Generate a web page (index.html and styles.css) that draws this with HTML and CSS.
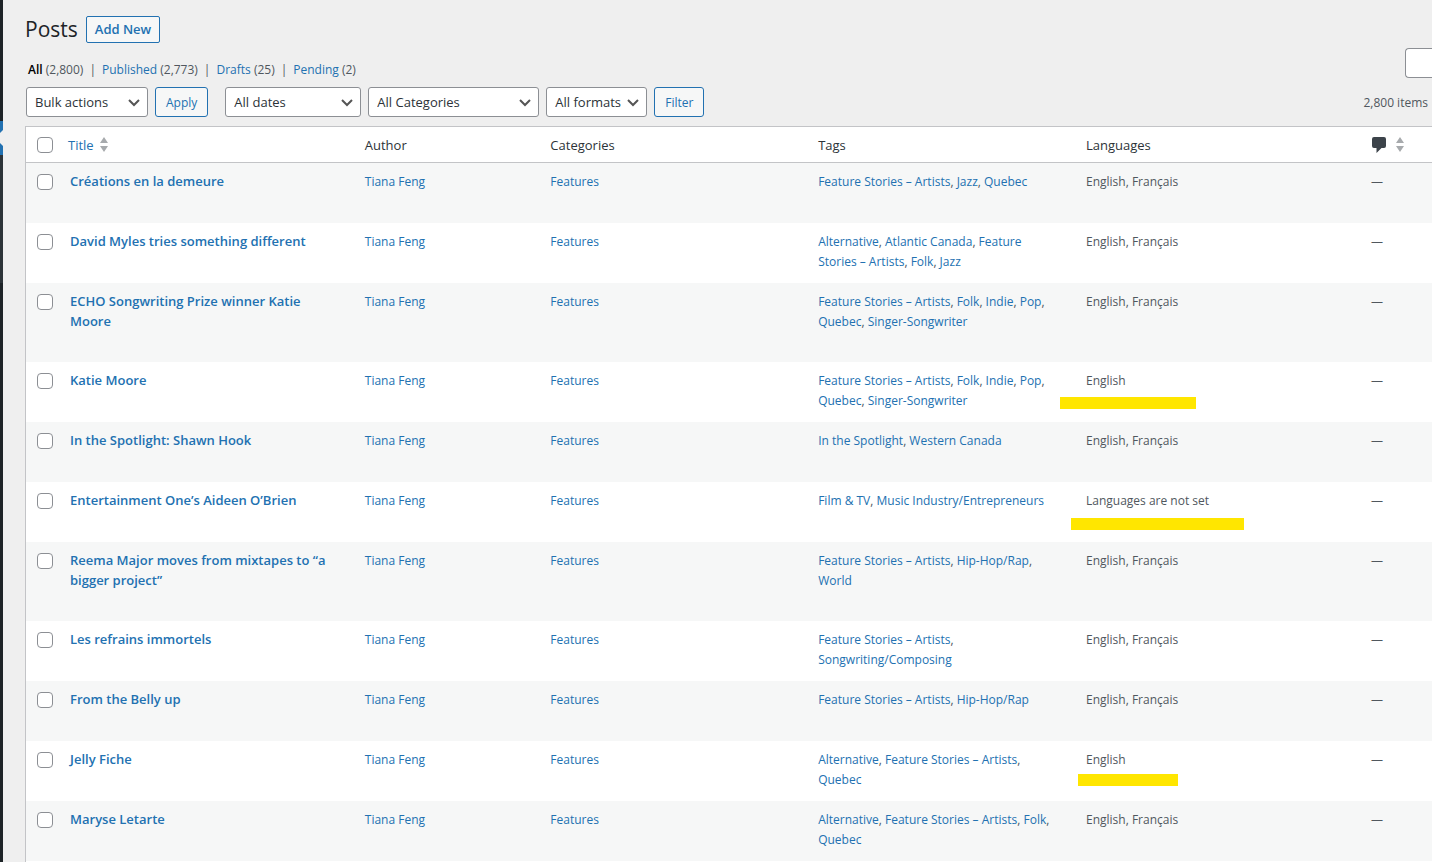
FILE: index.html
```html
<!DOCTYPE html>
<html lang="en">
<head>
    <meta charset="UTF-8">
    <meta name="viewport" content="width=device-width, initial-scale=1.0">
    <title>Posts</title>
    <link rel="stylesheet" href="styles.css">
</head>
<body>
    <aside class="admin-menu">
        <div class="menu-top"></div>
        <div class="menu-current">
            <div class="menu-arrow"></div>
        </div>
        <div class="menu-sub"></div>
    </aside>

    <main class="wrap">
        <header class="page-title">
            <h1>Posts</h1>
            <a href="#" class="add-new">Add New</a>
        </header>

        <div class="views">
            <ul class="status-links">
                <li><a href="#" class="current">All</a> (2,800)</li>
                <li><a href="#">Published</a> (2,773)</li>
                <li><a href="#">Drafts</a> (25)</li>
                <li><a href="#">Pending</a> (2)</li>
            </ul>
            <input type="search" class="search-box" aria-label="Search Posts">
        </div>

        <form class="tablenav">
            <select class="bulk" aria-label="Bulk actions"><option>Bulk actions</option></select>
            <button type="button" class="apply">Apply</button>
            <select class="dates" aria-label="Filter by date"><option>All dates</option></select>
            <select class="cats" aria-label="Filter by category"><option>All Categories</option></select>
            <select class="formats" aria-label="Filter by format"><option>All formats</option></select>
            <button type="button">Filter</button>
            <span class="count">2,800 items</span>
        </form>

        <div class="list">
            <table>
                <thead>
                    <tr>
                        <th class="col-check"><input type="checkbox" aria-label="Select all"></th>
                        <th class="col-title">
                            <a href="#">Title
                                <svg class="sort" width="8" height="15" viewBox="0 0 8 15"><path d="M4 0l4 6H0zM4 15l4-6H0z"/></svg>
                            </a>
                        </th>
                        <th class="col-author">Author</th>
                        <th class="col-cats">Categories</th>
                        <th class="col-tags">Tags</th>
                        <th class="col-langs">Languages</th>
                        <th class="col-comments">
                            <a href="#" aria-label="Comments">
                                <svg class="bubble" width="14" height="16" viewBox="0 0 14 16"><path d="M2 0h10q2 0 2 2v7q0 2-2 2h-2.500l-5 5v-5H2q-2 0-2-2V2q0-2 2-2z"/></svg>
                                <svg class="sort" width="8" height="15" viewBox="0 0 8 15"><path d="M4 0l4 6H0zM4 15l4-6H0z"/></svg>
                            </a>
                        </th>
                    </tr>
                </thead>
                <tbody>
                    <tr>
                        <td class="col-check"><input type="checkbox" aria-label="Select Créations en la demeure"></td>
                        <td class="col-title"><a href="#">Créations en la demeure</a></td>
                        <td><a href="#">Tiana Feng</a></td>
                        <td><a href="#">Features</a></td>
                        <td class="tags"><a href="#">Feature Stories – Artists</a>, <a href="#">Jazz</a>, <a href="#">Quebec</a></td>
                        <td>English, Français</td>
                        <td class="col-comments">—</td>
                    </tr>
                    <tr>
                        <td class="col-check"><input type="checkbox" aria-label="Select David Myles tries something different"></td>
                        <td class="col-title"><a href="#">David Myles tries something different</a></td>
                        <td><a href="#">Tiana Feng</a></td>
                        <td><a href="#">Features</a></td>
                        <td class="tags"><a href="#">Alternative</a>, <a href="#">Atlantic Canada</a>, <a href="#">Feature Stories – Artists</a>, <a href="#">Folk</a>, <a href="#">Jazz</a></td>
                        <td>English, Français</td>
                        <td class="col-comments">—</td>
                    </tr>
                    <tr>
                        <td class="col-check"><input type="checkbox" aria-label="Select ECHO Songwriting Prize winner Katie Moore"></td>
                        <td class="col-title"><a href="#">ECHO Songwriting Prize winner Katie Moore</a></td>
                        <td><a href="#">Tiana Feng</a></td>
                        <td><a href="#">Features</a></td>
                        <td class="tags"><a href="#">Feature Stories – Artists</a>, <a href="#">Folk</a>, <a href="#">Indie</a>, <a href="#">Pop</a>, <a href="#">Quebec</a>, <a href="#">Singer-Songwriter</a></td>
                        <td>English, Français</td>
                        <td class="col-comments">—</td>
                    </tr>
                    <tr>
                        <td class="col-check"><input type="checkbox" aria-label="Select Katie Moore"></td>
                        <td class="col-title"><a href="#">Katie Moore</a></td>
                        <td><a href="#">Tiana Feng</a></td>
                        <td><a href="#">Features</a></td>
                        <td class="tags"><a href="#">Feature Stories – Artists</a>, <a href="#">Folk</a>, <a href="#">Indie</a>, <a href="#">Pop</a>, <a href="#">Quebec</a>, <a href="#">Singer-Songwriter</a></td>
                        <td class="marked mark-katie">English</td>
                        <td class="col-comments">—</td>
                    </tr>
                    <tr>
                        <td class="col-check"><input type="checkbox" aria-label="Select In the Spotlight: Shawn Hook"></td>
                        <td class="col-title"><a href="#">In the Spotlight: Shawn Hook</a></td>
                        <td><a href="#">Tiana Feng</a></td>
                        <td><a href="#">Features</a></td>
                        <td class="tags"><a href="#">In the Spotlight</a>, <a href="#">Western Canada</a></td>
                        <td>English, Français</td>
                        <td class="col-comments">—</td>
                    </tr>
                    <tr>
                        <td class="col-check"><input type="checkbox" aria-label="Select Entertainment One’s Aideen O’Brien"></td>
                        <td class="col-title"><a href="#">Entertainment One’s Aideen O’Brien</a></td>
                        <td><a href="#">Tiana Feng</a></td>
                        <td><a href="#">Features</a></td>
                        <td class="tags"><a href="#">Film &amp; TV</a>, <a href="#">Music Industry/Entrepreneurs</a></td>
                        <td class="marked mark-unset">Languages are not set</td>
                        <td class="col-comments">—</td>
                    </tr>
                    <tr>
                        <td class="col-check"><input type="checkbox" aria-label="Select Reema Major moves from mixtapes to “a bigger project”"></td>
                        <td class="col-title"><a href="#">Reema Major moves from mixtapes to “a bigger project”</a></td>
                        <td><a href="#">Tiana Feng</a></td>
                        <td><a href="#">Features</a></td>
                        <td class="tags"><a href="#">Feature Stories – Artists</a>, <a href="#">Hip-Hop/Rap</a>, <a href="#">World</a></td>
                        <td>English, Français</td>
                        <td class="col-comments">—</td>
                    </tr>
                    <tr>
                        <td class="col-check"><input type="checkbox" aria-label="Select Les refrains immortels"></td>
                        <td class="col-title"><a href="#">Les refrains immortels</a></td>
                        <td><a href="#">Tiana Feng</a></td>
                        <td><a href="#">Features</a></td>
                        <td class="tags"><a href="#">Feature Stories – Artists</a>, <a href="#">Songwriting/Composing</a></td>
                        <td>English, Français</td>
                        <td class="col-comments">—</td>
                    </tr>
                    <tr>
                        <td class="col-check"><input type="checkbox" aria-label="Select From the Belly up"></td>
                        <td class="col-title"><a href="#">From the Belly up</a></td>
                        <td><a href="#">Tiana Feng</a></td>
                        <td><a href="#">Features</a></td>
                        <td class="tags"><a href="#">Feature Stories – Artists</a>, <a href="#">Hip-Hop/Rap</a></td>
                        <td>English, Français</td>
                        <td class="col-comments">—</td>
                    </tr>
                    <tr>
                        <td class="col-check"><input type="checkbox" aria-label="Select Jelly Fiche"></td>
                        <td class="col-title"><a href="#">Jelly Fiche</a></td>
                        <td><a href="#">Tiana Feng</a></td>
                        <td><a href="#">Features</a></td>
                        <td class="tags"><a href="#">Alternative</a>, <a href="#">Feature Stories – Artists</a>, <a href="#">Quebec</a></td>
                        <td class="marked mark-jelly">English</td>
                        <td class="col-comments">—</td>
                    </tr>
                    <tr>
                        <td class="col-check"><input type="checkbox" aria-label="Select Maryse Letarte"></td>
                        <td class="col-title"><a href="#">Maryse Letarte</a></td>
                        <td><a href="#">Tiana Feng</a></td>
                        <td><a href="#">Features</a></td>
                        <td class="tags"><a href="#">Alternative</a>, <a href="#">Feature Stories – Artists</a>, <a href="#">Folk</a>, <a href="#">Quebec</a></td>
                        <td>English, Français</td>
                        <td class="col-comments">—</td>
                    </tr>
                </tbody>
            </table>
        </div>
    </main>
</body>
</html>
```

FILE: styles.css
```css
* {
    box-sizing: border-box;
}

body {
    margin: 0;
    display: flex;
    min-height: 100vh;
    background: #efefef;
    color: #50575e;
    font-family: "Open Sans", "Noto Sans", sans-serif;
    font-size: 12px;
    line-height: 20px;
}

a {
    color: #2271b1;
    text-decoration: none;
}

/* Sidebar */
.admin-menu {
    width: 3px;
    flex-shrink: 0;
    background: #1d2327;
}

.menu-top {
    height: 121px;
}

.menu-current {
    height: 34px;
    padding-top: 9px;
    background: #2271b1;
}

.menu-arrow {
    height: 16px;
    background: #efefef;
    clip-path: polygon(0 3px, 100% 0, 100% 100%, 0 13px);
}

.menu-sub {
    height: 128px;
    background: #2c3338;
}

.wrap {
    flex: 1;
    min-width: 0;
    display: flex;
    flex-direction: column;
    padding-left: 22px;
}

/* Heading */
.page-title {
    display: flex;
    align-items: center;
    gap: 8px;
    padding-top: 14px;
}

.page-title h1 {
    margin: 0;
    color: #1d2327;
    font-size: 21px;
    font-weight: 400;
    line-height: 30px;
}

.add-new {
    padding: 2px 8px;
    border: 1px solid #2271b1;
    border-radius: 2px;
    background: #f6f7f7;
    font-size: 13px;
    font-weight: 600;
    line-height: 21px;
}

/* Status links and search */
.views {
    display: flex;
    justify-content: space-between;
    align-items: flex-end;
    margin-top: 4px;
}

.status-links {
    display: flex;
    margin: 0;
    padding: 0 0 0 3px;
    list-style: none;
    line-height: 16px;
}

.status-links li + li::before {
    content: "|";
    margin: 0 6px;
}

.status-links .current {
    color: #000;
    font-weight: 600;
}

.search-box {
    width: 27px;
    height: 30px;
    border: 1px solid #8c8f94;
    border-right: 0;
    border-radius: 4px 0 0 4px;
    background: #fff;
}

/* Filters */
.tablenav {
    display: flex;
    align-items: center;
    gap: 7px;
    padding: 9px 4px 9px 1px;
}

.tablenav select {
    height: 30px;
    padding: 0 24px 0 8px;
    border: 1px solid #8c8f94;
    border-radius: 3px;
    color: #2c3338;
    font: 13px "Open Sans", "Noto Sans", sans-serif;
    appearance: none;
    background: #fff url('data:image/svg+xml,<svg width="12" height="8" xmlns="http://www.w3.org/2000/svg"><path d="M1 1l5 5 5-5" fill="none" stroke="%23555" stroke-width="2"/></svg>') no-repeat right 7px top 11px;
}

.tablenav .bulk {
    width: 122px;
}

.tablenav .dates {
    width: 136px;
}

.tablenav .cats {
    width: 171px;
}

.tablenav .formats {
    width: 101px;
}

.tablenav button {
    height: 30px;
    padding: 0 10px;
    border: 1px solid #2271b1;
    border-radius: 3px;
    background: #f6f7f7;
    color: #2271b1;
    font: 12px "Open Sans", "Noto Sans", sans-serif;
}

.tablenav .apply {
    margin-right: 10px;
}

.count {
    margin-left: auto;
    padding-top: 2px;
}

/* Posts table */
.list {
    flex: 1;
    border: solid #c3c4c7;
    border-width: 1px 0 0 1px;
    background: #fff;
}

table {
    width: 100%;
    table-layout: fixed;
    border-collapse: separate;
    border-spacing: 0;
}

th {
    height: 36px;
    padding: 0 10px;
    border-bottom: 1px solid #c3c4c7;
    color: #2c3338;
    font-size: 13px;
    font-weight: 400;
    text-align: left;
    vertical-align: middle;
}

td {
    height: 60px;
    padding: 9px 10px 8px;
    vertical-align: top;
}

tbody tr:nth-child(odd) {
    background: #f6f7f7;
}

.col-check {
    width: 34px;
    padding-left: 11px;
    padding-right: 0;
}

th.col-title {
    padding-left: 8px;
}

td.col-title {
    padding-top: 8px;
    padding-bottom: 31px;
    font-size: 13px;
    font-weight: 600;
}

.tags {
    padding-right: 16px;
}

.col-author {
    width: 13.2%;
}

.col-cats,
.col-tags {
    width: 19.05%;
}

.col-langs {
    width: 20.2%;
}

.col-comments {
    width: 72px;
    padding-left: 11px;
}

th a {
    display: flex;
    align-items: center;
    gap: 6px;
}

th.col-comments {
    padding-left: 12px;
}

th.col-comments a {
    gap: 10px;
}

.sort {
    fill: #a7aaad;
}

.bubble {
    fill: #3c434a;
}

input[type="checkbox"] {
    display: block;
    width: 16px;
    height: 16px;
    margin: 0;
    border: 1px solid #8c8f94;
    border-radius: 4px;
    background: #fff;
    appearance: none;
}

td input[type="checkbox"] {
    margin-top: 2px;
}

/* Highlighter strokes over the language cells */
.marked {
    position: relative;
}

.marked::after {
    content: "";
    position: absolute;
    height: 12px;
    background: #ffe600;
}

.mark-katie::after {
    left: -16px;
    top: 35px;
    width: 136px;
}

.mark-unset::after {
    left: -5px;
    top: 36px;
    width: 173px;
}

.mark-jelly::after {
    left: 2px;
    top: 33px;
    width: 100px;
}
```
